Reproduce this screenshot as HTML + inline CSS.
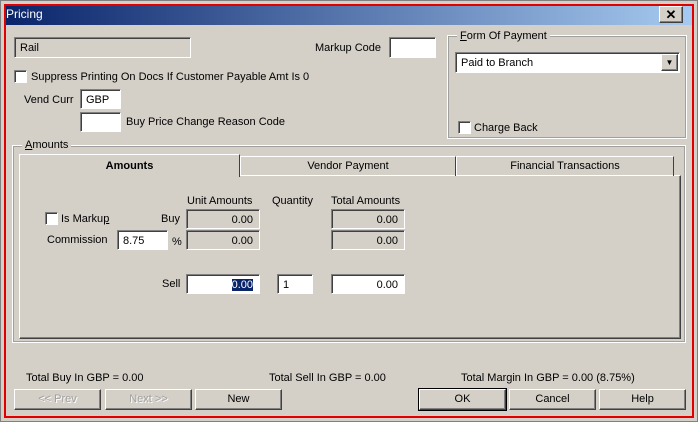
<!DOCTYPE html><html><head><style>
body{margin:0;width:698px;height:422px;background:#d4d0c8;font-family:"Liberation Sans",sans-serif;font-size:11px;color:#000;position:relative;overflow:hidden}
div,span{position:absolute;box-sizing:border-box}
.t{white-space:nowrap;line-height:13px}
.in{background:#fff;border-top:1px solid #808080;border-left:1px solid #808080;border-right:1px solid #fff;border-bottom:1px solid #fff;box-shadow:inset 1px 1px 0 #404040;padding:1px 4px 0 5px;display:flex;align-items:center;white-space:nowrap}
.ro{background:#d4d0c8}
.r{justify-content:flex-end;padding-right:6px}
.cb{width:13px;height:13px;background:#fff;border-top:1px solid #808080;border-left:1px solid #808080;border-right:1px solid #fff;border-bottom:1px solid #fff;box-shadow:inset 1px 1px 0 #404040}
.grp{border:1px solid #fff;box-shadow:inset 1px 1px 0 #a0a0a0, -1px -1px 0 #a0a0a0 inset}
.btn{border-top:1px solid #fff;border-left:1px solid #fff;border-right:1px solid #404040;border-bottom:1px solid #404040;box-shadow:inset -1px -1px 0 #808080;text-align:center;line-height:19px}
.dis{color:#a0a0a0;text-shadow:1px 1px 0 #fff}
</style></head><body>
<div style="left:0;top:0;width:698px;height:422px;border:1px solid #808080"></div>
<div style="top:4px;left:4px;width:690px;height:21px;background:linear-gradient(90deg,#0a246a,#a6caf0)"></div>
<div class="t" style="left:6px;top:8px;color:#fff;font-size:12px">Pricing</div>
<div class="btn" style="left:659px;top:6px;width:24px;height:17px;font-weight:bold;font-size:13px;line-height:15px;background:#d4d0c8">✕</div>
<div style="left:4px;top:4px;width:690px;height:414px;border:2px solid #e00000"></div>

<div class="in ro" style="left:14px;top:37px;width:177px;height:21px">Rail</div>
<div class="t" style="left:315px;top:42px">Markup Code</div>
<div class="in" style="left:389px;top:37px;width:47px;height:21px"></div>
<div class="cb" style="left:14px;top:70px"></div>
<div class="t" style="left:31px;top:71px">Suppress Printing On Docs If Customer Payable Amt Is 0</div>
<div class="t" style="left:24px;top:94px">Vend Curr</div>
<div class="in" style="left:80px;top:89px;width:41px;height:20px">GBP</div>
<div class="in" style="left:80px;top:112px;width:41px;height:20px"></div>
<div class="t" style="left:126px;top:116px">Buy Price Change Reason Code</div>

<div class="grp" style="left:447px;top:35px;width:240px;height:104px"></div>
<div class="t" style="left:457px;top:30px;padding:0 3px;background:#d4d0c8"><u>F</u>orm Of Payment</div>
<div class="in" style="left:455px;top:52px;width:225px;height:21px">Paid to Branch</div>
<div class="btn" style="left:661px;top:54px;width:17px;height:17px;background:#d4d0c8;font-size:8px;line-height:15px">▼</div>
<div class="cb" style="left:458px;top:121px"></div>
<div class="t" style="left:474px;top:122px">Charge Back</div>

<div class="grp" style="left:12px;top:145px;width:674px;height:198px"></div>
<div class="t" style="left:22px;top:139px;padding:0 3px;background:#d4d0c8"><u>A</u>mounts</div>
<div style="left:19px;top:175px;width:662px;height:164px;border-top:1px solid #fff;border-left:1px solid #fff;border-right:1px solid #404040;border-bottom:1px solid #404040;box-shadow:inset -1px -1px 0 #808080"></div>
<div style="left:19px;top:154px;width:221px;height:23px;background:#d4d0c8;border-top:1px solid #fff;border-left:1px solid #fff;border-right:1px solid #404040;font-weight:bold;text-align:center;line-height:22px">Amounts</div>
<div style="left:240px;top:156px;width:216px;height:20px;border-top:1px solid #fff;border-left:1px solid #fff;border-right:1px solid #404040;text-align:center;line-height:19px">Vendor Payment</div>
<div style="left:456px;top:156px;width:218px;height:20px;border-top:1px solid #fff;border-left:1px solid #fff;border-right:1px solid #404040;text-align:center;line-height:19px">Financial Transactions</div>

<div class="t" style="left:187px;top:195px">Unit Amounts</div>
<div class="t" style="left:272px;top:195px">Quantity</div>
<div class="t" style="left:331px;top:195px">Total Amounts</div>
<div class="cb" style="left:45px;top:212px"></div>
<div class="t" style="left:61px;top:213px">Is Marku<u>p</u></div>
<div class="t" style="left:161px;top:213px">Buy</div>
<div class="in ro r" style="left:186px;top:209px;width:74px;height:20px">0.00</div>
<div class="in ro r" style="left:331px;top:209px;width:74px;height:20px">0.00</div>
<div class="t" style="left:47px;top:234px">Commission</div>
<div class="in" style="left:117px;top:230px;width:51px;height:20px">8.75</div>
<div class="t" style="left:172px;top:236px">%</div>
<div class="in ro r" style="left:186px;top:230px;width:74px;height:20px">0.00</div>
<div class="in ro r" style="left:331px;top:230px;width:74px;height:20px">0.00</div>
<div class="t" style="left:162px;top:278px">Sell</div>
<div class="in r" style="left:186px;top:274px;width:74px;height:20px"><span style="position:static;background:#0a246a;color:#fff">0.00</span></div>
<div class="in" style="left:277px;top:274px;width:36px;height:20px">1</div>
<div class="in r" style="left:331px;top:274px;width:74px;height:20px">0.00</div>

<div class="t" style="left:26px;top:372px">Total Buy In GBP = 0.00</div>
<div class="t" style="left:269px;top:372px">Total Sell In GBP = 0.00</div>
<div class="t" style="left:461px;top:372px">Total Margin In GBP = 0.00 (8.75%)</div>
<div class="btn dis" style="left:14px;top:389px;width:87px;height:21px">&lt;&lt; Prev</div>
<div class="btn dis" style="left:105px;top:389px;width:87px;height:21px">Next &gt;&gt;</div>
<div class="btn" style="left:195px;top:389px;width:87px;height:21px">New</div>
<div class="btn" style="left:419px;top:389px;width:87px;height:21px;outline:1px solid #000">OK</div>
<div class="btn" style="left:509px;top:389px;width:87px;height:21px">Cancel</div>
<div class="btn" style="left:599px;top:389px;width:87px;height:21px">Help</div>
</body></html>
